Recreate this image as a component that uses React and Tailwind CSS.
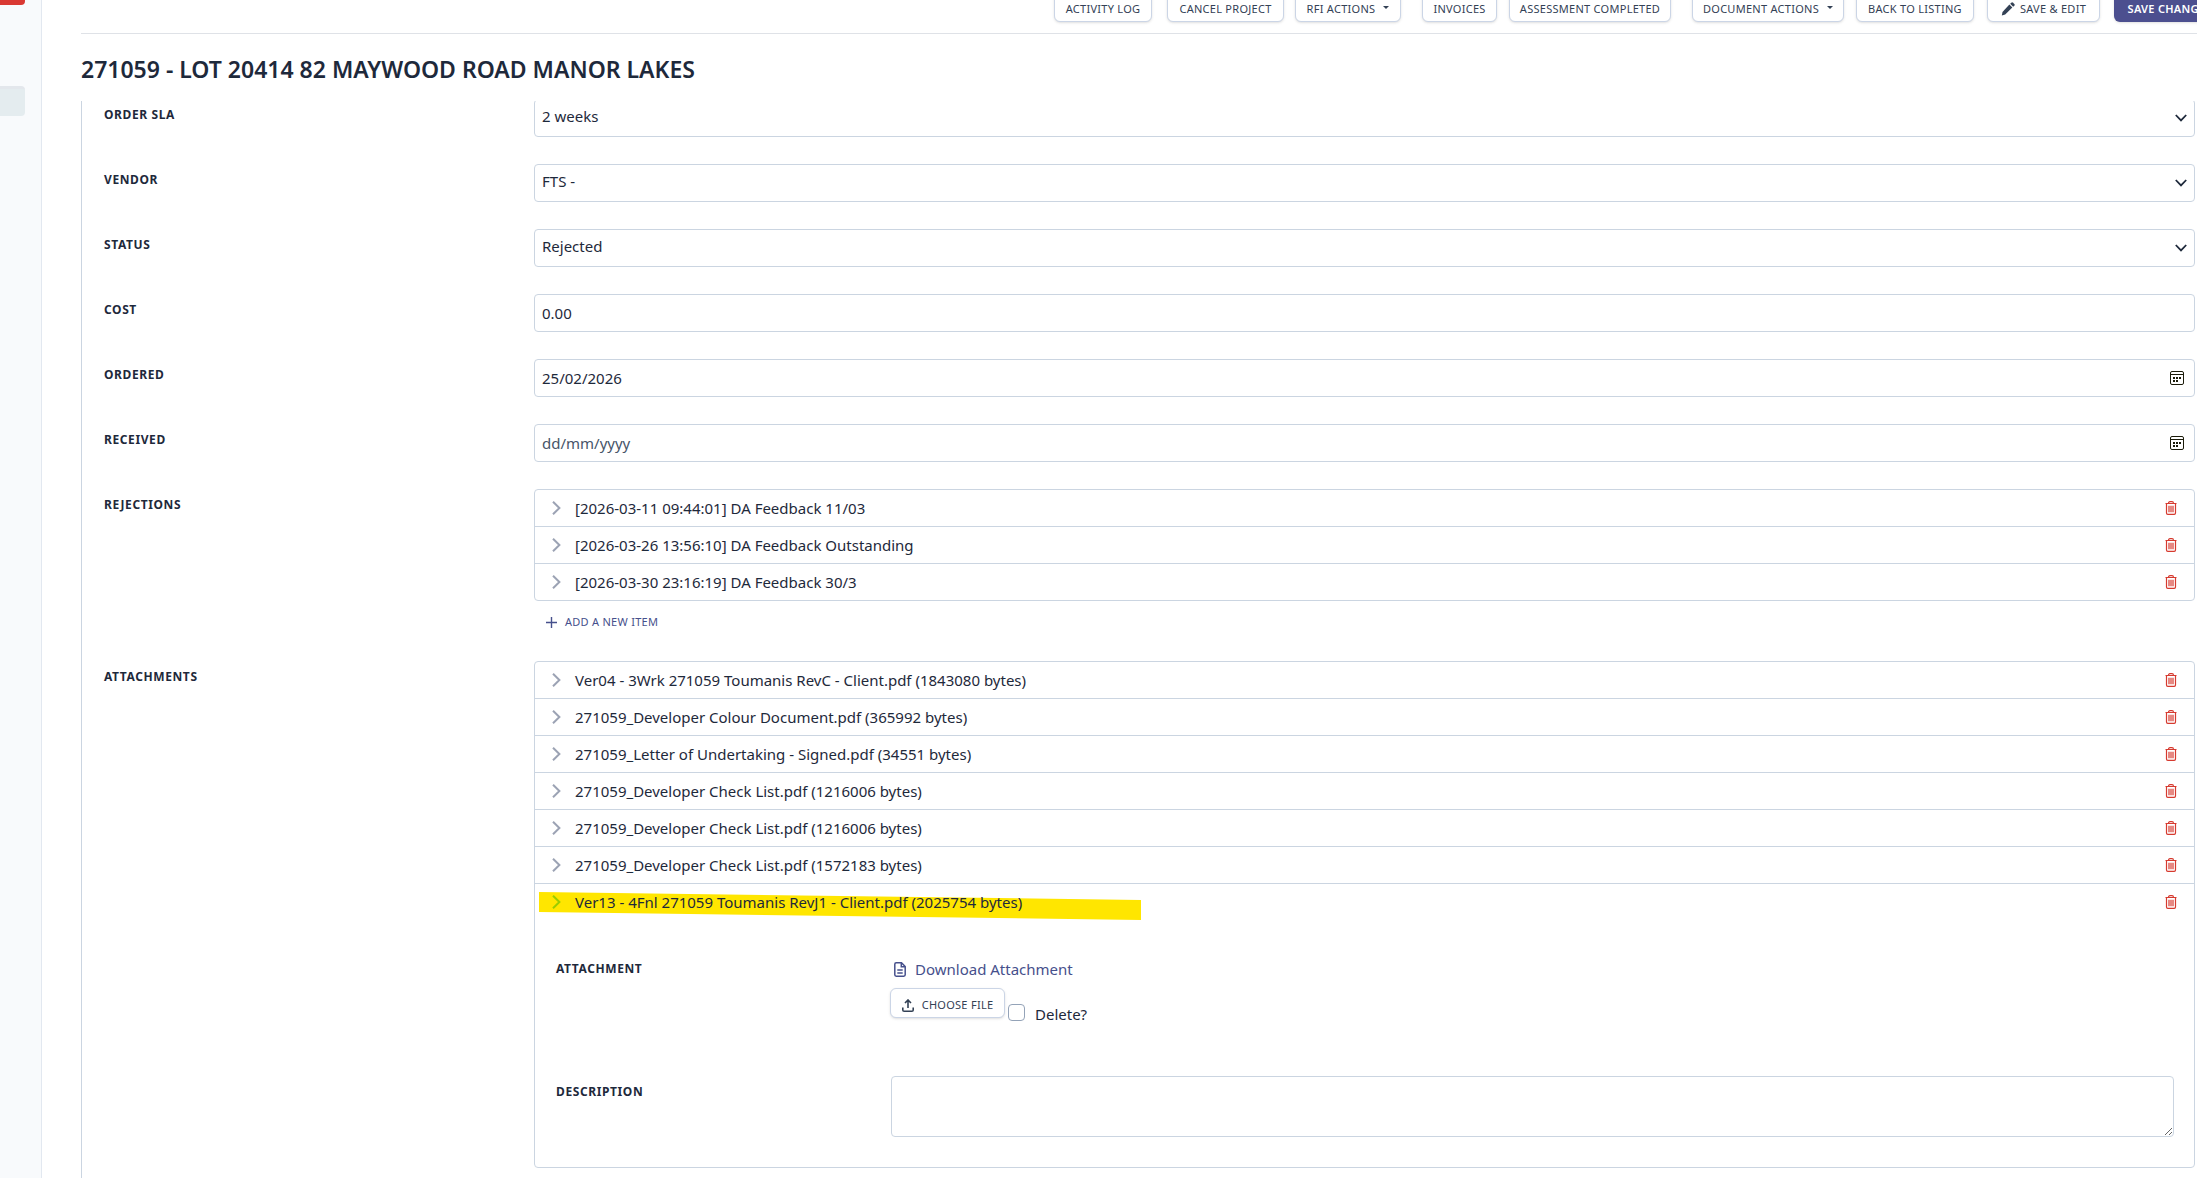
import React, { useState } from 'react';

const REJECTIONS = [
    '[2026-03-11 09:44:01] DA Feedback 11/03',
    '[2026-03-26 13:56:10] DA Feedback Outstanding',
    '[2026-03-30 23:16:19] DA Feedback 30/3',
];

const ATTACHMENTS = [
    'Ver04 - 3Wrk 271059 Toumanis RevC - Client.pdf (1843080 bytes)',
    '271059_Developer Colour Document.pdf (365992 bytes)',
    '271059_Letter of Undertaking - Signed.pdf (34551 bytes)',
    '271059_Developer Check List.pdf (1216006 bytes)',
    '271059_Developer Check List.pdf (1216006 bytes)',
    '271059_Developer Check List.pdf (1572183 bytes)',
];

const btn = 'h-[30px] pt-1 shrink-0 flex items-center justify-center rounded-md border border-[#cbd5e6] bg-white text-[11px] leading-4 tracking-wide uppercase text-[#334155] shadow-sm';
const input = 'block w-full h-[38px] rounded border border-[#cbd5e1] bg-white px-[7px] text-[15px] leading-5 text-[#1e293b] appearance-none';
const fieldLabel = 'pt-2 text-xs leading-4 font-bold tracking-wider uppercase text-[#1e293b]';

function PencilIcon() {
    return (
        <svg viewBox="0 0 14 14" className="w-[14px] h-[14px] mr-[5px]" fill="currentColor" aria-hidden="true">
            <path d="M8.4 2.6 11.3 5.5 4.2 12.6 0.8 13.4 1.5 10Z" />
            <path d="M9.2 1.8 10.3.7a1.3 1.3 0 0 1 1.8 0l1.2 1.2a1.3 1.3 0 0 1 0 1.8L12.2 4.8Z" />
        </svg>
    );
}

function TrashIcon() {
    return (
        <svg viewBox="0 0 12 14" className="w-3 h-[14px]" fill="none" stroke="currentColor" strokeWidth="1.2" aria-hidden="true">
            <path d="M.5 2.5h11M3.5 2.5c0-1 .6-1.8 1.5-1.8h2c.9 0 1.5.8 1.5 1.8M1.5 2.5v9.5c0 .8.5 1.3 1.3 1.3h6.4c.8 0 1.3-.5 1.3-1.3V2.5M4 4.8v6.4M6 4.8v6.4M8 4.8v6.4" />
        </svg>
    );
}

function CalendarIcon() {
    return (
        <svg viewBox="0 0 14 14" className="w-[14px] h-[14px]" fill="none" stroke="currentColor" aria-hidden="true">
            <rect x=".5" y=".5" width="13" height="13" rx="1.5" />
            <path d="M.5 3.5h13" />
            <path d="M3 7h2M6 7h2M9 7h2M3 10h2M6 10h2" strokeWidth="2" />
        </svg>
    );
}

function ChevronRight({ className }) {
    return (
        <svg viewBox="0 0 9 14" className={`w-[9px] h-[14px] ${className}`} fill="none" stroke="currentColor" strokeWidth="2" aria-hidden="true">
            <path d="M1 .7 7.4 7 1 13.3" />
        </svg>
    );
}

function Caret() {
    return <span className="ml-2 mb-1 border-x-[3px] border-t-[3px] border-x-transparent border-t-[#334155]" />;
}

function Row({ label, htmlFor, children }) {
    return (
        <div className="grid grid-cols-[430px_1fr] mb-[27px]">
            <label htmlFor={htmlFor} className={fieldLabel}>{label}</label>
            <div className="min-w-0">{children}</div>
        </div>
    );
}

function SelectField({ id, value }) {
    return (
        <div className="relative">
            <select id={id} defaultValue={value} className={`${input} pb-1`}>
                <option>{value}</option>
            </select>
            <svg viewBox="0 0 12 8" className="absolute right-2 top-[15px] w-3 h-2 text-[#1e293b] pointer-events-none" fill="none" stroke="currentColor" strokeWidth="1.8" aria-hidden="true">
                <path d="M.8 1 6 6.4 11.2 1" />
            </svg>
        </div>
    );
}

function DateField({ id, value, placeholder }) {
    return (
        <div className="relative">
            <input id={id} type="text" defaultValue={value} placeholder={placeholder} className={`${input} placeholder:text-[#475569]`} />
            <button type="button" aria-label="Open calendar" className="absolute right-[11px] top-3 text-[#1b1b0a]">
                <CalendarIcon />
            </button>
        </div>
    );
}

function ItemHeader({ text, marked }) {
    return (
        <div className="relative h-9 flex items-center px-[17px]">
            {marked && (
                <svg viewBox="0 0 602 28" preserveAspectRatio="none" className="absolute left-1 top-2 w-[602px] h-7" aria-hidden="true">
                    <path d="M0 0 602 8V28L0 20Z" fill="#ffe600" />
                </svg>
            )}
            <button type="button" className="relative flex items-center gap-[14px] text-[15px] leading-5 text-[#1e293b]">
                <ChevronRight className={marked ? 'text-[#9acd00]' : 'text-[#9ca3b4]'} />
                {text}
            </button>
            <button type="button" aria-label="Remove item" className="ml-auto text-[#d63a2f]">
                <TrashIcon />
            </button>
        </div>
    );
}

export default function App() {
    const [remove, setRemove] = useState(false);

    return (
        <div className="h-screen flex overflow-hidden bg-white font-['Noto_Sans','Open_Sans',sans-serif] text-[#1e293b]">
            <aside className="w-[42px] shrink-0 border-r border-[#e2e8f0] bg-[#f8fafc]">
                <div className="w-[25px] h-[5px] rounded-br bg-[#d93832]" />
                <div className="w-[25px] h-[30px] mt-[81px] rounded-r border-t-[3px] border-[#e3e7ec] bg-[#e4ecef]" />
            </aside>

            <main className="flex-1 min-w-0 flex flex-col pl-[39px]">
                <header className="h-[34px] shrink-0 flex items-end justify-end border-b border-[#dfe2e7] pb-[11px]">
                    <div className="flex -mr-7">
                        <button type="button" className={`${btn} w-[98px] mr-[15px]`}>Activity Log</button>
                        <button type="button" className={`${btn} w-[117px] mr-[11px]`}>Cancel Project</button>
                        <button type="button" className={`${btn} w-[106px] mr-[21px]`}>RFI Actions<Caret /></button>
                        <button type="button" className={`${btn} w-[75px] mr-3`}>Invoices</button>
                        <button type="button" className={`${btn} w-[162px] mr-[21px]`}>Assessment Completed</button>
                        <button type="button" className={`${btn} w-[152px] mr-3`}>Document Actions<Caret /></button>
                        <button type="button" className={`${btn} w-[118px] mr-[13px]`}>Back to Listing</button>
                        <button type="button" className={`${btn} w-[113px] mr-[14px]`}><PencilIcon />Save &amp; Edit</button>
                        <button type="button" className="h-[30px] pt-1 w-[111px] shrink-0 rounded-md bg-[#4c4f8f] text-[11px] leading-4 font-semibold tracking-wide uppercase text-white shadow-sm">Save Changes</button>
                    </div>
                </header>

                <h1 className="mt-[19px] text-[23px] leading-8 font-semibold text-[#1e293b]">271059 - LOT 20414 82 MAYWOOD ROAD MANOR LAKES</h1>

                <form className="mt-4 flex-1 min-h-0 overflow-hidden border-l border-[#cbd5e1] pl-[22px] pr-0.5" onSubmit={e => e.preventDefault()}>
                    <div className="-mt-[2px]">
                        <Row label="Order SLA" htmlFor="sla"><SelectField id="sla" value="2 weeks" /></Row>
                        <Row label="Vendor" htmlFor="vendor"><SelectField id="vendor" value="FTS -" /></Row>
                        <Row label="Status" htmlFor="status"><SelectField id="status" value="Rejected" /></Row>
                        <Row label="Cost" htmlFor="cost"><input id="cost" type="text" defaultValue="0.00" className={input} /></Row>
                        <Row label="Ordered" htmlFor="ordered"><DateField id="ordered" value="25/02/2026" /></Row>
                        <Row label="Received" htmlFor="received"><DateField id="received" placeholder="dd/mm/yyyy" /></Row>

                        <Row label="Rejections">
                            <ul className="rounded border border-[#cbd5e1] divide-y divide-[#cbd5e1]">
                                {REJECTIONS.map((text, i) => <li key={i}><ItemHeader text={text} /></li>)}
                            </ul>
                            <button type="button" className="mt-[11px] mb-0.5 ml-3 flex items-center gap-2 text-[11px] leading-5 tracking-wide uppercase text-[#46508c]">
                                <svg viewBox="0 0 11 11" className="w-[11px] h-[11px]" stroke="currentColor" strokeWidth="1.4" aria-hidden="true">
                                    <path d="M5.5 0v11M0 5.5h11" />
                                </svg>
                                Add a new item
                            </button>
                        </Row>

                        <Row label="Attachments">
                            <ul className="rounded border border-[#cbd5e1] divide-y divide-[#cbd5e1]">
                                {ATTACHMENTS.map((text, i) => <li key={i}><ItemHeader text={text} /></li>)}
                                <li>
                                    <ItemHeader text="Ver13 - 4Fnl 271059 Toumanis RevJ1 - Client.pdf (2025754 bytes)" marked />
                                    <div className="pt-[33px] pl-[21px] pr-5 pb-[30px]">
                                        <div className="grid grid-cols-[334px_1fr] h-[120px]">
                                            <span className={fieldLabel}>Attachment</span>
                                            <div>
                                                <a href="#download" className="mt-1 ml-1 flex items-center gap-[9px] text-[15px] leading-6 text-[#46508c]">
                                                    <svg viewBox="0 0 12 15" className="w-3 h-[15px]" fill="none" stroke="currentColor" strokeWidth="1.5" aria-hidden="true">
                                                        <path d="M7.5.8H2.2C1.4.8.8 1.4.8 2.2v10.6c0 .8.6 1.4 1.4 1.4h7.6c.8 0 1.4-.6 1.4-1.4V4.5ZM7.3.8v3.9h3.9M3.3 8h5.4M3.3 11h5.4" />
                                                    </svg>
                                                    Download Attachment
                                                </a>
                                                <div className="mt-[7px] flex items-start">
                                                    <button type="button" className={`${btn} w-[115px]`}>
                                                        <svg viewBox="0 0 12 13" className="w-3 h-[13px] mr-2" fill="none" stroke="currentColor" strokeWidth="1.6" aria-hidden="true">
                                                            <path d="M6 9V1.2M3 4l3-3 3 3M.8 8.5v2.4c0 .8.5 1.3 1.3 1.3h7.8c.8 0 1.3-.5 1.3-1.3V8.5" />
                                                        </svg>
                                                        Choose File
                                                    </button>
                                                    <input id="delete" type="checkbox" checked={remove} onChange={e => setRemove(e.target.checked)} className="mt-4 ml-[3px] w-[17px] h-[17px] appearance-none rounded border border-[#94a3b8] bg-white checked:bg-[#4c4f8f]" />
                                                    <label htmlFor="delete" className="mt-4 ml-[10px] text-[15px] leading-5">Delete?</label>
                                                </div>
                                            </div>
                                        </div>
                                        <div className="mt-[3px] grid grid-cols-[335px_1fr]">
                                            <label htmlFor="description" className={fieldLabel}>Description</label>
                                            <textarea id="description" className="block w-full h-[61px] rounded border border-[#cbd5e1] px-2 py-1 text-[15px]" />
                                        </div>
                                    </div>
                                </li>
                            </ul>
                        </Row>
                    </div>
                </form>
            </main>
        </div>
    );
}
